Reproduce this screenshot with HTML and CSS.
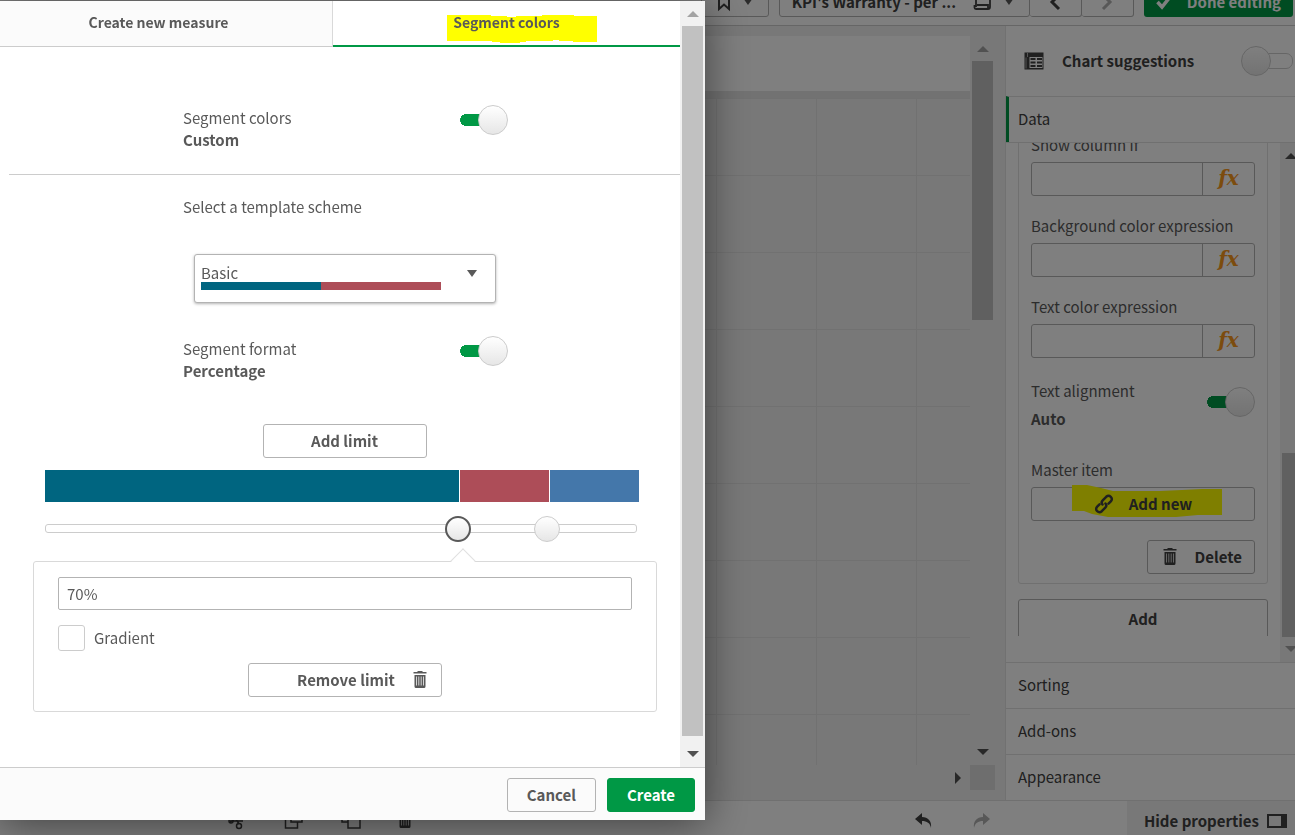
FILE: index.html
```html
<!doctype html>
<html lang="en">
  <head>
    <meta charset="UTF-8" />
    <meta name="viewport" content="width=device-width, initial-scale=1.0" />
    <title>KPI's Warranty - Edit sheet</title>
    <link rel="stylesheet" href="styles.css">
  </head>
  <body>
    <!-- Shared icons -->
    <svg class="sprite" aria-hidden="true">
      <symbol id="icon-trash" viewBox="0 0 14 18">
        <path d="M4.500 0h5v1h4v1.500h-13V1h4z" fill="currentColor" />
        <path d="M1.500 4h11v11.500a1.500 1.500 0 0 1-1.500 1.500H3a1.500 1.500 0 0 1-1.500-1.500z" fill="currentColor" />
        <path d="M3.500 5.500v9M5.800 5.500v9M8.200 5.500v9M10.500 5.500v9" stroke="#fff" stroke-width="1" opacity=".75" />
      </symbol>
    </svg>

    <div class="app">
      <!-- Top toolbar -->
      <header class="toolbar">
        <button class="tool-button bookmark" type="button" aria-label="Bookmarks">
          <svg width="14" height="20" viewBox="0 0 14 20"><path d="M2 1h10v16l-5-4.500L2 17z" fill="none" stroke="currentColor" stroke-width="2" /></svg>
          <span class="caret"></span>
        </button>
        <div class="tool-group">
          <button class="tool-button sheet-name" type="button">
            <span>KPI's Warranty - per ...</span>
            <svg width="20" height="18" viewBox="0 0 20 18"><path d="M4 1v12H2.500v1.500A1.500 1.500 0 0 0 4 16h12a2 2 0 0 0 2-2V1M5 12h11v4" fill="none" stroke="currentColor" stroke-width="1.800" /></svg>
            <span class="caret"></span>
          </button>
          <button class="tool-button arrow" type="button" aria-label="Previous sheet">
            <svg width="12" height="18" viewBox="0 0 12 18"><path d="M10 2L3 9l7 7" fill="none" stroke="currentColor" stroke-width="3" /></svg>
          </button>
          <button class="tool-button arrow is-disabled" type="button" aria-label="Next sheet">
            <svg width="12" height="18" viewBox="0 0 12 18"><path d="M2 2l7 7-7 7" fill="none" stroke="currentColor" stroke-width="3" /></svg>
          </button>
        </div>
        <button class="done-button" type="button">
          <svg width="16" height="16" viewBox="0 0 16 16"><path d="M1.500 8l4.500 5L14 3" fill="none" stroke="currentColor" stroke-width="3.500" /></svg>
          Done editing
        </button>
      </header>

      <div class="workspace">
        <!-- Sheet -->
        <main class="sheet">
          <div class="sheet-body">
            <div class="sheet-title"></div>
            <div class="sheet-grid"></div>
            <div class="h-scroll"><span class="tri tri-right"></span></div>
          </div>
          <div class="sheet-scroll">
            <div class="scrollbar">
              <span class="tri tri-up is-muted"></span>
              <span class="thumb sheet-thumb"></span>
              <span class="tri tri-down"></span>
            </div>
            <div class="corner"></div>
          </div>
        </main>

        <!-- Properties panel -->
        <aside class="panel">
          <div class="suggestions">
            <svg width="20" height="18" viewBox="0 0 20 18">
              <rect x=".5" y=".5" width="19" height="17" fill="currentColor" />
              <path d="M3.500 1v4M2 5.500v11" stroke="#aaa" stroke-width="1" />
              <path d="M5.500 5h13v11h-13z" fill="#fff" />
              <path d="M6.500 7h5M6.500 10.500h5M6.500 14h5M13 7h5M13 10.500h5M13 14h5" stroke="currentColor" stroke-width="2" />
            </svg>
            <label for="suggestions">Chart suggestions</label>
            <input class="switch" id="suggestions" type="checkbox">
          </div>
          <button class="section is-open" type="button">Data</button>
          <div class="data-area">
            <div class="data-scroll">
              <div class="card">
                <div class="field">
                  <label for="show-if">Show column if</label>
                  <div class="expression"><input id="show-if" type="text"><button type="button">fx</button></div>
                </div>
                <div class="field">
                  <label for="background">Background color expression</label>
                  <div class="expression"><input id="background" type="text"><button type="button">fx</button></div>
                </div>
                <div class="field">
                  <label for="text-color">Text color expression</label>
                  <div class="expression"><input id="text-color" type="text"><button type="button">fx</button></div>
                </div>
                <div class="switch-row align-row">
                  <label for="alignment"><span>Text alignment</span><strong>Auto</strong></label>
                  <input class="switch" id="alignment" type="checkbox" checked>
                </div>
                <div class="master">Master item</div>
                <button class="button add-new" type="button">
                  <svg class="marker" width="150" height="34" viewBox="0 0 150 34"><path d="M0 0h15l14 3 12 3h47l22-1 20-1h20v26h-24l-22 2H36l-16-3-8-3H0z" fill="#ff0" /></svg>
                  <svg class="link-icon" width="20" height="20" viewBox="0 0 20 20">
                    <g fill="none" stroke="currentColor" stroke-width="2.500" stroke-linecap="round">
                      <path d="M8.500 10.500c-1.200-1.500-1-3 .2-4.200l3.500-3.500c1.500-1.300 3.200-1.300 4.600 0s1.400 3.200 0 4.600l-2.300 2.300" />
                      <path d="M11.500 9.500c1.200 1.500 1 3-.2 4.200l-3.500 3.500c-1.500 1.300-3.200 1.300-4.600 0s-1.400-3.200 0-4.600l2.300-2.300" />
                    </g>
                  </svg>
                  <span>Add new</span>
                </button>
                <button class="button delete" type="button">
                  <svg width="14" height="18"><use href="#icon-trash" /></svg>
                  Delete
                </button>
              </div>
              <button class="button add" type="button">Add</button>
            </div>
            <div class="scrollbar panel-scrollbar">
              <span class="tri tri-up"></span>
              <span class="thumb panel-thumb"></span>
              <span class="tri tri-down is-muted"></span>
            </div>
          </div>
          <button class="section" type="button">Sorting</button>
          <button class="section" type="button">Add-ons</button>
          <button class="section" type="button">Appearance</button>
        </aside>
      </div>

      <!-- Bottom bar -->
      <footer class="bottom-bar">
        <div class="edit-tools">
          <button type="button" aria-label="Cut"><svg width="20" height="20" viewBox="0 0 20 20" fill="none" stroke="currentColor" stroke-width="1.500"><path d="M15 2L3 12.500M6 4l6 10M3 11h13" /><circle cx="12" cy="16" r="2.500" /><circle cx="4" cy="11" r="2" /></svg></button>
          <button type="button" aria-label="Copy"><svg width="20" height="20" viewBox="0 0 20 20" fill="none" stroke="currentColor" stroke-width="1.500"><path d="M7 2h11v10H7z" /><path d="M7 7H1.500v11h12v-6" /></svg></button>
          <button type="button" aria-label="Paste"><svg width="20" height="20" viewBox="0 0 20 20" fill="none" stroke="currentColor" stroke-width="1.500"><path d="M7 12H1V2h12v5" /><path d="M7 7h12v11H7z" /></svg></button>
          <button type="button" aria-label="Delete"><svg width="14" height="18"><use href="#icon-trash" /></svg></button>
        </div>
        <div class="history">
          <button type="button" aria-label="Undo"><svg width="20" height="18" viewBox="0 0 20 18"><path d="M8 1L1 7l7 6V9c5 0 8 2 9 7C18 9 14 5 8 5z" fill="currentColor" /></svg></button>
          <button class="is-disabled" type="button" aria-label="Redo"><svg width="20" height="18" viewBox="0 0 20 18"><path d="M12 1l7 6-7 6V9c-5 0-8 2-9 7C2 9 6 5 12 5z" fill="currentColor" /></svg></button>
        </div>
        <button class="hide-properties" type="button">
          Hide properties
          <svg width="20" height="14" viewBox="0 0 20 14"><path d="M1 1h18v12H1z" fill="none" stroke="currentColor" stroke-width="2" /><path d="M14 1h5v12h-5z" fill="currentColor" /></svg>
        </button>
      </footer>
    </div>

    <div class="backdrop"></div>

    <!-- Create measure dialog -->
    <div class="dialog" role="dialog" aria-label="Create new measure">
      <div class="dialog-main">
        <div class="dialog-content">
          <div class="tabs" role="tablist">
            <button class="tab" type="button" role="tab">Create new measure</button>
            <button class="tab is-active" type="button" role="tab">
              <span class="marked">
                <svg class="marker" width="150" height="30" viewBox="0 0 150 30"><path d="M0 1h44v1h16v1h9v-1h26v-1h32v1h23v26h-24v-1h-14v-1h-6v1h-27v1h-6v1H53v-1h-8v-1H0z" fill="#ff0" /></svg>
                <span>Segment colors</span>
              </span>
            </button>
          </div>
          <div class="form">
            <div class="switch-row">
              <label for="segment-colors"><span>Segment colors</span><strong>Custom</strong></label>
              <input class="switch" id="segment-colors" type="checkbox" checked>
            </div>
            <hr>
            <label class="scheme-label" for="scheme">Select a template scheme</label>
            <div class="scheme">
              <select id="scheme"><option>Basic</option></select>
              <span class="scheme-bar"></span>
              <span class="caret"></span>
            </div>
            <div class="switch-row">
              <label for="segment-format"><span>Segment format</span><strong>Percentage</strong></label>
              <input class="switch" id="segment-format" type="checkbox" checked>
            </div>
            <button class="button add-limit" type="button">Add limit</button>
            <div class="segments">
              <span class="blue" style="flex-grow: 70"></span>
              <span class="red" style="flex-grow: 15"></span>
              <span class="light" style="flex-grow: 15"></span>
            </div>
            <div class="slider">
              <input class="is-selected" type="range" min="0" max="100" value="70" aria-label="Limit 1">
              <input type="range" min="0" max="100" value="85" aria-label="Limit 2">
            </div>
            <div class="limit">
              <input class="limit-value" type="text" value="70%" aria-label="Limit value">
              <label class="gradient"><input type="checkbox">Gradient</label>
              <button class="button remove" type="button">
                Remove limit
                <svg width="14" height="18"><use href="#icon-trash" /></svg>
              </button>
            </div>
          </div>
        </div>
        <div class="scrollbar dialog-scrollbar">
          <span class="tri tri-up is-muted"></span>
          <span class="thumb dialog-thumb"></span>
          <span class="tri tri-down"></span>
        </div>
      </div>
      <div class="dialog-footer">
        <button class="button" type="button">Cancel</button>
        <button class="button primary" type="button">Create</button>
      </div>
    </div>
  </body>
</html>
```
FILE: styles.css
```css
* {
  box-sizing: border-box;
}

body {
  margin: 0;
  height: 100vh;
  overflow: hidden;
  background: #fff;
  color: #595959;
  font-family: "Source Sans Pro", "Noto Sans CJK SC", sans-serif;
  font-size: 15px;
  line-height: 22px;
}

button, input, select {
  font: inherit;
  color: inherit;
  margin: 0;
}

button {
  padding: 0;
  border: none;
  background: none;
  white-space: nowrap;
}

svg {
  display: block;
  flex: none;
}

strong {
  font-weight: 600;
}

.sprite {
  position: absolute;
  width: 0;
  height: 0;
}

/* App shell */
.app {
  display: flex;
  flex-direction: column;
  height: 100%;
}

.toolbar {
  display: flex;
  flex: none;
  justify-content: flex-end;
  align-items: flex-end;
  gap: 10px;
  height: 26px;
  padding: 0 2px 8px 0;
  border-bottom: 1px solid #ccc;
  overflow: hidden;
}

.tool-group {
  display: flex;
}

.tool-button {
  display: flex;
  align-items: center;
  height: 34px;
  padding-top: 3px;
  border: 1px solid #b3b3b3;
  border-radius: 3px;
  color: #404040;
  font-weight: 600;
}

.tool-group .tool-button + .tool-button {
  border-left: none;
}

.bookmark {
  gap: 12px;
  padding: 3px 15px 0;
}

.sheet-name {
  gap: 12px;
  padding: 3px 15px 0 12px;
}

.sheet-name span:first-child {
  width: 168px;
  text-align: left;
}

.arrow {
  justify-content: center;
  width: 52px;
}

.is-disabled {
  color: #b0b0b0;
}

.done-button {
  display: flex;
  align-items: center;
  gap: 15px;
  height: 34px;
  padding: 3px 12px 0;
  border-radius: 3px;
  background: #009845;
  color: #fff;
  font-weight: 600;
}

.caret {
  width: 0;
  height: 0;
  border: 5px solid transparent;
  border-top: 7px solid #595959;
  border-bottom: none;
}

.workspace {
  display: flex;
  flex: 1;
  min-height: 0;
}

/* Sheet */
.sheet {
  display: flex;
  flex: 1;
  min-width: 0;
  padding: 10px 10px 10px 0;
  background: #f0f0f0;
}

.sheet-body {
  display: flex;
  flex: 1;
  flex-direction: column;
}

.sheet-title {
  height: 55px;
  background: #fff;
}

.sheet-grid {
  flex: 1;
  border-top: 7px solid #e4e4e4;
  background-image: linear-gradient(#e2e2e2 1px, transparent 1px), linear-gradient(90deg, #e2e2e2 1px, transparent 1px);
  background-size: 100px 77px;
  background-position: right 54px top 0;
}

.h-scroll {
  display: flex;
  justify-content: flex-end;
  align-items: center;
  height: 25px;
  padding-right: 9px;
}

.sheet-scroll {
  display: flex;
  flex-direction: column;
  width: 25px;
}

.corner {
  height: 25px;
  background: #dcdcdc;
}

/* Scrollbars */
.scrollbar {
  display: flex;
  flex: 1;
  flex-direction: column;
  align-items: center;
  padding: 10px 2px;
  background: #f1f1f1;
}

.thumb {
  width: 21px;
  background: #c1c1c1;
}

.tri {
  width: 0;
  height: 0;
  border: 6px solid transparent;
}

.tri-up {
  border-top: none;
  border-bottom-color: #505050;
  margin-bottom: 9px;
}

.tri-down {
  border-bottom: none;
  border-top-color: #505050;
  margin-top: auto;
}

.tri-right {
  border-right: none;
  border-left-color: #505050;
}

.tri-up.is-muted {
  border-bottom-color: #a3a3a3;
}

.tri-down.is-muted {
  border-top-color: #a3a3a3;
}

.sheet-thumb {
  height: 259px;
}

/* Properties panel */
.panel {
  display: flex;
  flex: 0 0 290px;
  flex-direction: column;
  border-left: 1px solid #e2e2e2;
  background: #fff;
  overflow: hidden;
}

.suggestions {
  display: flex;
  align-items: center;
  height: 70px;
  padding: 0 2px 0 18px;
  color: #404040;
  font-weight: 600;
}

.suggestions label {
  flex: 1;
  padding-left: 18px;
}

.section {
  height: 46px;
  padding: 0 0 2px 12px;
  border-top: 1px solid #e0e0e0;
  color: #404040;
  text-align: left;
}

.section.is-open {
  padding-left: 9px;
  border-left: 3px solid #009845;
}

.data-area {
  display: flex;
  flex: 1;
  min-height: 0;
  border-top: 1px solid #e0e0e0;
}

.data-scroll {
  flex: 1;
  margin-bottom: 26px;
  padding: 0 12px;
  overflow: hidden;
}

.card {
  display: flex;
  flex-direction: column;
  margin: -21px 0 15px;
  padding: 11px 12px 9px;
  border: 1px solid #e0e0e0;
  border-radius: 3px;
}

.field {
  display: flex;
  flex-direction: column;
  gap: 6px;
  margin-bottom: 19px;
}

.expression {
  display: flex;
  height: 34px;
  border: 1px solid #b3b3b3;
  border-radius: 3px;
}

.expression input {
  flex: 1;
  min-width: 0;
  border: none;
  background: none;
}

.expression button {
  width: 52px;
  padding-bottom: 3px;
  border-left: 1px solid #b3b3b3;
  color: #f8981d;
  font: italic bold 20px "DejaVu Serif", "Liberation Serif", serif;
}

.switch-row {
  display: flex;
  justify-content: space-between;
}

.switch-row label {
  display: flex;
  flex-direction: column;
}

.align-row {
  margin-top: 3px;
}

.align-row label {
  gap: 6px;
}

.align-row .switch {
  margin-top: 8px;
}

.master {
  margin: 29px 0 6px;
}

.button {
  display: flex;
  justify-content: center;
  align-items: center;
  height: 34px;
  border: 1px solid #b3b3b3;
  border-radius: 3px;
  font-weight: 600;
}

.panel .button {
  color: #404040;
}

.add-new {
  position: relative;
  gap: 15px;
}

.add-new span, .link-icon {
  position: relative;
}

.marker {
  position: absolute;
}

.add-new .marker {
  top: -3px;
  left: 40px;
}

.delete {
  align-self: flex-end;
  gap: 18px;
  margin-top: 19px;
  padding: 0 12px 0 15px;
}

.add {
  width: 100%;
  height: 40px;
}

.panel-scrollbar {
  flex: 0 0 15px;
  align-items: flex-start;
  min-width: 0;
}

.panel-scrollbar .tri {
  margin-left: 3px;
}

.panel-thumb {
  height: 184px;
  margin-top: auto;
}

.panel-scrollbar .tri-down {
  margin-top: 9px;
}

/* Switch */
.switch {
  display: flex;
  flex: none;
  align-items: center;
  appearance: none;
  width: 48px;
  height: 28px;
  border-radius: 14px;
  background: linear-gradient(#009845, #009845) no-repeat 8px center / 24px 12px, radial-gradient(circle at 6px 14px, #009845 6px, transparent 6px);
}

.switch::before {
  content: "";
  width: 28px;
  height: 28px;
  margin-left: auto;
  border: 1px solid #ccc;
  border-radius: 50%;
  background: linear-gradient(#fff, #e6e6e6);
}

.switch:not(:checked) {
  position: relative;
  width: 52px;
  background: none;
}

.switch:not(:checked)::before {
  z-index: 1;
  margin-left: 0;
}

.switch:not(:checked)::after {
  content: "";
  position: absolute;
  right: 0;
  width: 40px;
  height: 14px;
  border: 1px solid #ccc;
  border-radius: 7px;
}

/* Bottom bar */
.bottom-bar {
  display: flex;
  flex: none;
  height: 35px;
  border-top: 1px solid #e0e0e0;
  color: #404040;
}

.edit-tools, .history {
  display: flex;
  align-items: center;
  gap: 37px;
}

.edit-tools {
  padding: 4px 0 0 227px;
}

.history {
  margin: 6px 136px 0 auto;
}

.hide-properties {
  display: flex;
  align-items: center;
  gap: 8px;
  padding: 6px 8px 0 17px;
  background: #f0f0f0;
  font-weight: 600;
}

.backdrop {
  position: fixed;
  inset: 0;
  z-index: 10;
  background: rgba(0, 0, 0, 0.5);
}

/* Dialog */
.dialog {
  position: fixed;
  inset: 1px auto 15px 0;
  z-index: 11;
  display: flex;
  flex-direction: column;
  width: 100%;
  max-width: 705px;
  background: #fff;
  box-shadow: 0 4px 40px rgba(0, 0, 0, 0.5);
}

.dialog-main {
  display: flex;
  flex: 1;
  min-height: 0;
}

.dialog-content {
  flex: 1;
  overflow: hidden;
}

.tabs {
  display: flex;
  height: 46px;
  margin-left: -15px;
}

.tab {
  flex: 1 1 0;
  padding-bottom: 3px;
  border-right: 1px solid #d9d9d9;
  border-bottom: 1px solid #ccc;
  background: #fbfbfb;
  font-size: 14px;
  font-weight: 600;
}

.tab.is-active {
  border-right: none;
  border-bottom: 2px solid #009845;
  background: #fff;
}

.marked, .marked span {
  position: relative;
}

.marked .marker {
  top: -4px;
  left: -6px;
  margin-top: 6px;
  top: -4px;
}

.form {
  display: flex;
  flex-direction: column;
  padding: 59px 0 0 9px;
}

.form .switch-row {
  width: 325px;
  margin-left: 174px;
}

.form hr {
  width: 100%;
  margin: 23px 0 21px;
  border: none;
  border-top: 1px solid #ccc;
}

.form .switch-row label {
  padding-top: 1px;
}

.scheme-label {
  margin-left: 174px;
}

.scheme {
  position: relative;
  width: 302px;
  margin: 36px 0 34px 185px;
}

.scheme select {
  display: block;
  appearance: none;
  width: 100%;
  height: 49px;
  padding: 0 6px 12px;
  border: 1px solid #b3b3b3;
  border-radius: 3px;
  background: #fff;
  box-shadow: 0 1px 3px rgba(0, 0, 0, 0.3);
}

.scheme-bar {
  position: absolute;
  top: 28px;
  left: 7px;
  width: 240px;
  height: 8px;
  background: linear-gradient(90deg, #006580 50%, #ad4d58 50%);
}

.scheme .caret {
  position: absolute;
  top: 16px;
  right: 19px;
}

.add-limit {
  width: 164px;
  margin: 42px auto 12px;
}

.segments {
  display: flex;
  gap: 1px;
  height: 32px;
  margin: 0 41px 0 36px;
}

.blue {
  background: #006580;
}

.red {
  background: #ad4d58;
}

.light {
  background: #4477aa;
}

/* Two range inputs share one track */
.slider {
  position: relative;
  height: 9px;
  margin: 22px 43px 28px 36px;
  border: 1px solid #ccc;
  border-radius: 3px;
}

.slider input {
  position: absolute;
  top: -10px;
  left: -14px;
  appearance: none;
  width: calc(100% + 26px);
  height: 28px;
  background: none;
  pointer-events: none;
}

.slider input::-webkit-slider-thumb {
  appearance: none;
  width: 26px;
  height: 26px;
  border: 1px solid #ccc;
  border-radius: 50%;
  background: linear-gradient(#fff, #e6e6e6);
  pointer-events: auto;
}

.slider .is-selected::-webkit-slider-thumb {
  border: 2px solid #595959;
}

.limit {
  position: relative;
  display: flex;
  flex-direction: column;
  margin: 0 23px 0 24px;
  padding: 15px 24px 14px;
  border: 1px solid #d9d9d9;
  border-radius: 3px;
}

.limit::before {
  content: "";
  position: absolute;
  top: -10px;
  left: calc(70% - 15px);
  width: 17px;
  height: 17px;
  border: 1px solid #e0e0e0;
  border-right: none;
  border-bottom: none;
  background: linear-gradient(135deg, #fff 50%, transparent 50%);
  transform: rotate(45deg);
}

.limit-value {
  height: 33px;
  padding: 0 8px 1px;
  border: 1px solid #b3b3b3;
  border-radius: 2px;
}

.gradient {
  display: flex;
  align-items: center;
  gap: 9px;
  margin: 15px 0 12px;
}

.gradient input {
  appearance: none;
  width: 27px;
  height: 26px;
  border: 1px solid #ccc;
  border-radius: 3px;
}

.remove {
  align-self: center;
  gap: 18px;
  width: 194px;
  padding-left: 34px;
}

.dialog-scrollbar {
  flex: 0 0 25px;
}

.dialog-thumb {
  flex: 1;
}

.dialog-scrollbar .tri-down {
  margin-top: 15px;
}

.dialog-footer {
  display: flex;
  flex: none;
  justify-content: flex-end;
  gap: 11px;
  height: 53px;
  padding: 10px;
  border-top: 1px solid #ccc;
  background: #fbfbfb;
}

.dialog-footer .button {
  padding: 0 19px;
}

.dialog-footer .primary {
  border-color: #009845;
  background: #009845;
  color: #fff;
}
```
